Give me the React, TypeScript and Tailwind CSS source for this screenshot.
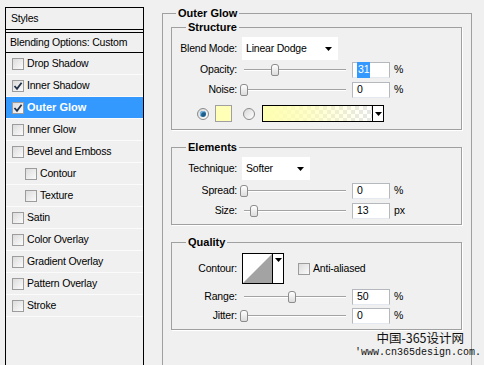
import React from "react";

const STYLE_ROWS: { label: string; checked?: boolean; selected?: boolean; indent?: boolean }[] = [
  { label: "Drop Shadow" },
  { label: "Inner Shadow", checked: true },
  { label: "Outer Glow", checked: true, selected: true },
  { label: "Inner Glow" },
  { label: "Bevel and Emboss" },
  { label: "Contour", indent: true },
  { label: "Texture", indent: true },
  { label: "Satin" },
  { label: "Color Overlay" },
  { label: "Gradient Overlay" },
  { label: "Pattern Overlay" },
  { label: "Stroke" },
];

const Checkbox = ({ checked }: { checked?: boolean }) => (
  <span className="flex size-[12px] shrink-0 items-center justify-center border border-[#9c9c9c] bg-gradient-to-br from-[#dcdcdc] to-[#fbfbfb]">
    {checked && (
      <svg width="10" height="10" viewBox="0 0 10 10">
        <path d="M1.5 5 L4 7.8 L8.6 1.8" fill="none" stroke="#21314a" strokeWidth="1.8" />
      </svg>
    )}
  </span>
);

const Radio = ({ checked }: { checked?: boolean }) => (
  <span className="flex size-[12px] shrink-0 items-center justify-center rounded-full border border-[#8a8a8a] bg-gradient-to-br from-[#d8d8d8] to-[#ffffff]">
    {checked && <span className="size-[6px] rounded-full bg-[#1d5d8c] shadow-[inset_1px_1px_1px_#7ec0ee]" />}
  </span>
);

const Arrow = () => (
  <svg width="7" height="4" viewBox="0 0 7 4">
    <path d="M0 0 H7 L3.5 4 Z" fill="#000" />
  </svg>
);

const Slider = ({ value }: { value: number }) => (
  <div className="relative h-[16px] w-[104px] shrink-0">
    <div className="absolute top-[7px] right-0 left-[2px] h-[2px] border-t border-[#a3a3a3] border-b border-b-white" />
    <div
      className="absolute top-[2px] h-[12px] w-[8px] rounded-t-[3px] rounded-b-[2px] border border-[#8c8c8c] bg-gradient-to-b from-white to-[#dcdcdc]"
      style={{ left: `${value - 2}px` }}
    />
  </div>
);

const Field = ({ value, unit, selected }: { value: string; unit: string; selected?: boolean }) => (
  <>
    <div className="ml-[6px] flex h-[16px] w-[38px] shrink-0 items-center border border-[#b5b8bd] border-b-[#e3e9ef] bg-white pl-[4px]">
      {selected ? <span className="bg-[#3399ff] px-[1px] text-white">{value}</span> : value}
    </div>
    <span className="ml-[4px]">{unit}</span>
  </>
);

const Label = ({ children }: { children: React.ReactNode }) => (
  <span className="w-[66px] shrink-0 pr-[1px] text-right">{children}</span>
);

const SliderRow = (props: { label: string; pos: number; value: string; unit: string; selected?: boolean; className?: string }) => (
  <div className={`flex h-[16px] items-center ${props.className ?? ""}`}>
    <Label>{props.label}</Label>
    <span className="ml-[4px]" />
    <Slider value={props.pos} />
    <Field value={props.value} unit={props.unit} selected={props.selected} />
  </div>
);

const Dropdown = ({ text, width }: { text: string; width: string }) => (
  <div className={`ml-[4px] flex h-[23px] items-center justify-between bg-white pr-[6px] pl-[4px] ${width}`}>
    <span>{text}</span>
    <Arrow />
  </div>
);

const Group = ({ title, className, children }: { title: string; className?: string; children: React.ReactNode }) => (
  <fieldset className={`border border-[#a0a0a0] shadow-[1px_1px_0_#fff] ${className ?? ""}`}>
    <legend className="ml-[14px] px-[2px] font-bold text-[11px] leading-[13px] tracking-normal">{title}</legend>
    {children}
  </fieldset>
);

export default function App() {
  return (
    <div className="relative flex h-[365px] w-[484px] overflow-hidden bg-[#f0f0f0] font-['Liberation_Sans',Arial,sans-serif] text-[10.5px] text-black tracking-[-0.2px]">
      <aside className="mt-[7px] ml-[5px] flex h-[400px] w-[139px] shrink-0 flex-col border border-black">
        <div className="flex h-[22px] items-center border-b border-black pl-[5px]">Styles</div>
        <div className="h-[2px]" />
        <div className="flex h-[21px] items-center border-y border-black pl-[4px]">Blending Options: Custom</div>
        {STYLE_ROWS.map((row) => (
          <div
            key={row.label}
            className={`flex h-[22px] items-center gap-[3px] border-b border-[#fbfbfb] ${row.indent ? "pl-[19px]" : "pl-[6px]"} ${
              row.selected ? "bg-[#3399ff] font-bold text-[11px] text-white tracking-normal" : ""
            }`}
          >
            <Checkbox checked={row.checked} />
            <span>{row.label}</span>
          </div>
        ))}
      </aside>

      <fieldset className="mt-[7px] ml-[18px] h-[420px] w-[310px] shrink-0 border border-[#a0a0a0] pr-[9px] pl-[8px]">
        <legend className="ml-[5px] px-[2px] font-bold text-[11px] leading-[13px] tracking-normal">Outer Glow</legend>

        <Group title="Structure" className="mt-[1px] pb-[7px]">
          <div className="mt-[3px] flex h-[23px] items-center">
            <Label>Blend Mode:</Label>
            <Dropdown text="Linear Dodge" width="w-[96px]" />
          </div>
          <SliderRow label="Opacity:" pos={31} value="31" unit="%" selected className="mt-[2px]" />
          <SliderRow label="Noise:" pos={0} value="0" unit="%" className="mt-[4px]" />
          <div className="mt-[7px] flex h-[17px] items-center pl-[25px]">
            <Radio checked />
            <span className="ml-[6px] size-[17px] border border-[#a0a0a0] bg-[#ffffb8]" />
            <span className="ml-[11px]" />
            <Radio />
            <div className="ml-[7px] flex h-[17px] w-[122px] border border-black">
              <div className="h-full flex-1 bg-[linear-gradient(to_right,#ffffb0_0%,rgba(255,255,176,0.7)_40%,rgba(255,255,176,0)_100%),repeating-conic-gradient(#e6e6e6_0_25%,#ffffff_0_50%)] bg-[length:auto,8px_8px]" />
              <div className="flex w-[11px] items-center justify-center border-l border-black bg-white">
                <Arrow />
              </div>
            </div>
          </div>
        </Group>

        <Group title="Elements" className="mt-[11px] pb-[5px]">
          <div className="mt-[3px] flex h-[23px] items-center">
            <Label>Technique:</Label>
            <Dropdown text="Softer" width="w-[68px]" />
          </div>
          <SliderRow label="Spread:" pos={0} value="0" unit="%" className="mt-[3px]" />
          <SliderRow label="Size:" pos={10} value="13" unit="px" className="mt-[4px]" />
        </Group>

        <Group title="Quality" className="mt-[11px] pb-[5px]">
          <div className="mt-[4px] flex h-[31px] items-center">
            <Label>Contour:</Label>
            <div className="ml-[4px] flex h-[31px] w-[42px] border border-black bg-white">
              <svg width="29" height="29" viewBox="0 0 29 29" className="shrink-0">
                <path d="M0 29 L29 0 V29 Z" fill="#a3a3a3" />
              </svg>
              <div className="flex flex-1 justify-center border-l border-black pt-[4px]">
                <Arrow />
              </div>
            </div>
            <span className="ml-[14px]" />
            <Checkbox />
            <span className="ml-[3px]">Anti-aliased</span>
          </div>
          <SliderRow label="Range:" pos={48} value="50" unit="%" className="mt-[5px]" />
          <SliderRow label="Jitter:" pos={0} value="0" unit="%" className="mt-[3px]" />
        </Group>
      </fieldset>

      <div className="absolute top-[330px] left-[355px] flex flex-col items-end gap-[2px] text-[#111] tracking-normal">
        <span className="mr-[17px] font-['Noto_Sans_CJK_SC',sans-serif] text-[12.5px] leading-[15px]">中国-365设计网</span>
        <span className="font-['Liberation_Mono',monospace] text-[10px] leading-[11px]">'www.cn365design.com.</span>
      </div>
    </div>
  );
}
